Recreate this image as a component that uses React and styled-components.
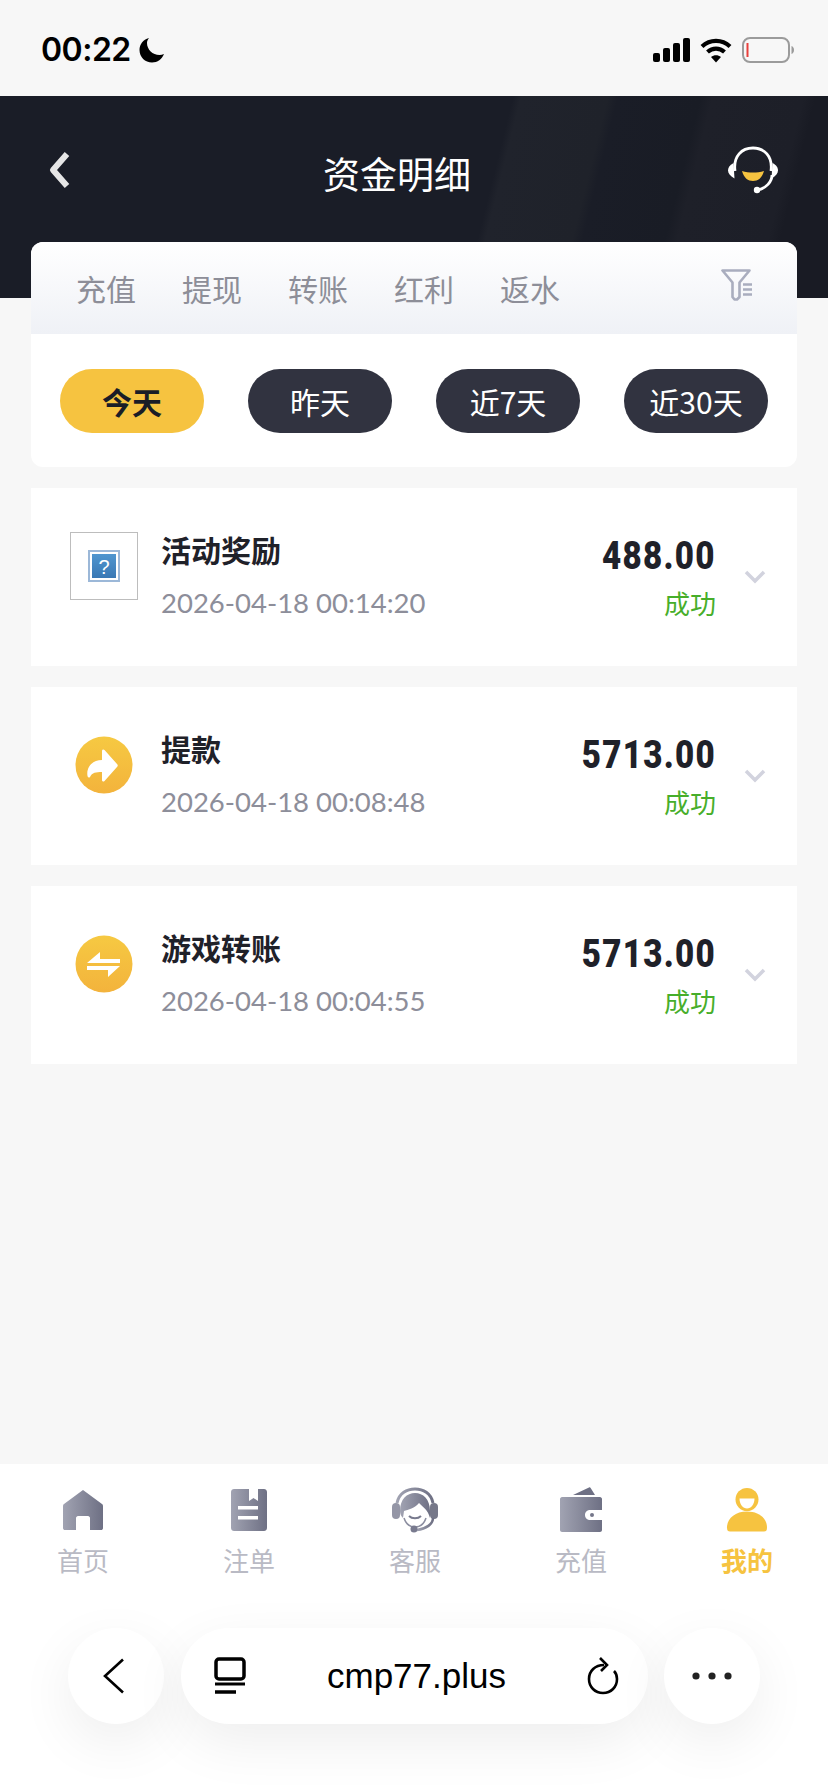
import React from 'react';
import styled, { createGlobalStyle } from 'styled-components';

const GlobalStyle = createGlobalStyle`
  html, body { margin: 0; padding: 0; background: #f7f7f7; }
  * { box-sizing: border-box; }
  body { font-family: "Noto Sans CJK SC", "Noto Sans", sans-serif; }
`;

const Page = styled.div`
  width: 828px;
  height: 1792px;
  display: flex;
  flex-direction: column;
  background: #f7f7f7;
  overflow: hidden;
`;

const StatusBar = styled.div`
  height: 96px;
  flex: none;
  padding: 30px 34px 0 41px;
  display: flex;
  justify-content: space-between;
  align-items: flex-start;
`;

const Clock = styled.div`
  display: flex;
  align-items: center;
  gap: 8px;
  font: 600 32px/40px Inter, sans-serif;
  letter-spacing: -0.5px;
  color: #000;
`;

const StatusIcons = styled.div`
  display: flex;
  align-items: center;
  gap: 10px;
  padding-top: 7px;
`;

const Header = styled.header`
  height: 202px;
  flex: none;
  padding: 0 50px 54px 48px;
  display: flex;
  align-items: center;
  justify-content: space-between;
  color: #fff;
  background: linear-gradient(
    104deg,
    #1a1d27 0,
    #1a1d27 498px,
    #20232c 506px,
    #1f222a 590px,
    #1a1d27 600px,
    #191c25 680px,
    #1e2029 692px,
    #1d1f28 780px,
    #191b24 792px
  );
`;

const Title = styled.h1`
  margin: 6px 0 0 -4px;
  font-size: 37px;
  line-height: 48px;
  font-weight: 400;
  color: #fff;
`;

const Content = styled.main`
  padding: 0 31px;
  margin-top: -56px;
  display: flex;
  flex-direction: column;
  gap: 21px;
`;

const Panel = styled.section`
  height: 225px;
  border-radius: 12px;
  overflow: hidden;
  background: #fff;
`;

const TabRow = styled.div`
  height: 92px;
  padding: 0 44px 0 45px;
  display: flex;
  align-items: center;
  gap: 46px;
  background: linear-gradient(180deg, #ffffff 0%, #eff1f6 100%);
`;

const Tab = styled.span`
  font-size: 30px;
  line-height: 40px;
  color: #8d8e98;
`;

const FilterButton = styled.span`
  margin-left: auto;
  display: flex;
  margin-top: -7px;
`;

const PillRow = styled.div`
  padding: 35px 29px 0;
  display: flex;
  justify-content: space-between;
`;

const Pill = styled.span`
  width: 144px;
  height: 64px;
  border-radius: 32px;
  display: flex;
  align-items: center;
  justify-content: center;
  font-size: 30px;
  font-weight: ${(p) => (p.$active ? 700 : 400)};
  color: ${(p) => (p.$active ? '#1a1d27' : '#fff')};
  background: ${(p) => (p.$active ? '#f6c340' : '#313340')};
`;

const Card = styled.article`
  height: 178px;
  background: #fff;
  padding: 0 31px 0 39px;
  display: flex;
  align-items: center;
`;

const IconSlot = styled.div`
  width: 68px;
  height: 68px;
  flex: none;
  margin-top: -22px;
  margin-right: 23px;
  display: flex;
  align-items: center;
  justify-content: center;
`;

const BrokenImage = styled.div`
  width: 68px;
  height: 68px;
  border: 1px solid #bdbdbd;
  display: flex;
  align-items: center;
  justify-content: center;
`;

const Info = styled.div`
  flex: 1;
  display: flex;
  flex-direction: column;
  gap: 16px;
  margin-top: -5px;
`;

const Name = styled.div`
  font-size: 30px;
  line-height: 40px;
  font-weight: 700;
  color: #1f2129;
`;

const Time = styled.div`
  font: 400 27.5px/36px Lato, "Noto Sans", sans-serif;
  color: #8d8e9a;
`;

const Result = styled.div`
  display: flex;
  flex-direction: column;
  align-items: flex-end;
  margin-top: 0;
  margin-right: 28px;
`;

const Amount = styled.div`
  font: 900 39px/44px Roboto, sans-serif;
  letter-spacing: 1.5px;
  color: #1f2129;
  transform: scaleX(0.85);
  transform-origin: right center;
`;

const State = styled.div`
  margin-top: 7px;
  font-size: 26px;
  line-height: 36px;
  color: #47ae2a;
`;

const TabBar = styled.nav`
  margin-top: auto;
  height: 328px;
  flex: none;
  background: #fff;
  display: flex;
  flex-direction: column;
`;

const NavRow = styled.div`
  display: grid;
  grid-template-columns: repeat(5, 166px);
  padding-top: 23px;
`;

const NavItem = styled.div`
  display: flex;
  flex-direction: column;
  align-items: center;
  gap: 9px;
  font-size: 26px;
  line-height: 36px;
  font-weight: ${(p) => (p.$active ? 700 : 400)};
  color: ${(p) => (p.$active ? '#f6c340' : '#b9bac4')};
`;

const NavIcon = styled.div`
  height: 46px;
  display: flex;
  align-items: center;
  justify-content: center;
`;

const BrowserBar = styled.div`
  margin-top: 50px;
  padding: 0 68px;
  display: flex;
  justify-content: space-between;
`;

const RoundButton = styled.div`
  width: 96px;
  height: 96px;
  border-radius: 50%;
  background: #fff;
  display: flex;
  align-items: center;
  justify-content: center;
  box-shadow: 0 18px 56px rgba(0, 0, 0, 0.07);
`;

const UrlBar = styled.div`
  width: 467px;
  height: 96px;
  border-radius: 48px;
  background: #fff;
  padding: 0 28px 0 33px;
  display: flex;
  align-items: center;
  justify-content: space-between;
  box-shadow: 0 18px 56px rgba(0, 0, 0, 0.07);
`;

const Url = styled.span`
  font: 400 35px/40px "Liberation Sans", Arial, sans-serif;
  color: #000;
`;

const Moon = () => (
  <svg width="26" height="26" viewBox="0 0 26 26">
    <path d="M10 1C4 2.500 0.500 7.500 0.500 13c0 7 5.500 12.500 12.500 12.500 5.500 0 10-3.500 12-8.500-1.500.6-3 1-4.500 1C13.500 18 8 12.500 8 6c0-1.800.7-3.500 2-5z" fill="#000" />
  </svg>
);

const Signal = () => (
  <svg width="37" height="24" viewBox="0 0 37 24" fill="#000">
    <rect x="0" y="15" width="7" height="9" rx="2" />
    <rect x="10" y="10" width="7" height="14" rx="2" />
    <rect x="20" y="5" width="7" height="19" rx="2" />
    <rect x="30" y="0" width="7" height="24" rx="2" />
  </svg>
);

const Wifi = () => (
  <svg width="32" height="25" viewBox="0 0 32 25" fill="none" stroke="#000" strokeWidth="4.200">
    <path d="M2 8.500C10 1 22 1 30 8.500" />
    <path d="M7.500 14c5-4.500 12-4.500 17 0" />
    <path d="M16 24.500l-5-5.500c3-2.300 7-2.300 10 0z" fill="#000" stroke="none" />
  </svg>
);

const Battery = () => (
  <svg width="52" height="26" viewBox="0 0 52 26" fill="none">
    <rect x="1" y="1" width="46" height="24" rx="7" stroke="#9b9b9b" strokeWidth="2" fill="#f7f7f7" />
    <rect x="4.500" y="6" width="2" height="14" fill="#e8403c" />
    <path d="M49.500 9c1.500.5 2.500 2 2.500 4s-1 3.500-2.500 4z" fill="#9b9b9b" />
  </svg>
);

const BackArrow = () => (
  <svg width="22" height="38" viewBox="0 0 22 38" fill="none">
    <path d="M19 3L5 19l14 16" stroke="#e6e6e6" strokeWidth="6" strokeLinejoin="round" />
  </svg>
);

const ServiceIcon = () => (
  <svg width="50" height="48" viewBox="0 0 50 48" fill="none">
    <path d="M7 25C5 10 14 2 25 2s20 8 18 23" stroke="#fff" strokeWidth="2.800" />
    <path d="M44 29c0 7-6 13-14 15" stroke="#fff" strokeWidth="2.800" />
    <circle cx="29" cy="44" r="3.200" fill="#fff" />
    <path d="M5.500 17C1.500 19 0 22 0 24.500s2 5.500 6.500 8z" fill="#fff" />
    <path d="M44.500 17c4 2 5.500 5 5.500 7.500s-2 5.500-6.500 8z" fill="#fff" />
    <path d="M14 25c7 2 15 2 22 0-2 7-6 10-11 10s-9-3-11-10z" fill="#f6c340" />
  </svg>
);

const FilterIcon = () => (
  <svg width="32" height="32" viewBox="0 0 32 32" fill="none" stroke="#a9adbe" strokeWidth="2.600">
    <path d="M1.500 1.500h27L18.500 13.500V28l-2.500 2.500h-2.500L11.500 28V13.500z" strokeLinejoin="round" />
    <path d="M22 15.500h9M22 20.500h9M22 25.500h9" />
  </svg>
);

const QuestionImage = () => (
  <svg width="32" height="32" viewBox="0 0 32 32">
    <defs>
      <linearGradient id="qFill" x1="0" y1="0" x2="0" y2="1">
        <stop offset="0" stopColor="#5096cf" />
        <stop offset="1" stopColor="#3a78b4" />
      </linearGradient>
    </defs>
    <rect x="0" y="0" width="32" height="32" fill="#9cb8d8" />
    <rect x="2" y="2" width="28" height="28" fill="#fff" />
    <rect x="4" y="4" width="24" height="24" fill="url(#qFill)" />
    <text x="16" y="24" textAnchor="middle" fontFamily="Liberation Sans" fontSize="20" fill="#fff">?</text>
  </svg>
);

const CoinGradient = ({ id }) => (
  <defs>
    <linearGradient id={id} x1="0" y1="0" x2="0" y2="1">
      <stop offset="0" stopColor="#f6c942" />
      <stop offset="1" stopColor="#f3b33c" />
    </linearGradient>
  </defs>
);

const WithdrawIcon = () => (
  <svg width="58" height="58" viewBox="0 0 58 58">
    <CoinGradient id="coinA" />
    <circle cx="29" cy="29" r="28.500" fill="url(#coinA)" />
    <path d="M27 15c0-1.500 1.500-2 2.500-1L42 28c1 1 1 2 0 3L29.500 45c-1 1-2.500.5-2.500-1v-8c-6 0-10 .5-12 5-1 1-2 .5-2.500-1-1.500-9 5-16 14.500-16z" fill="#fff" />
  </svg>
);

const TransferIcon = () => (
  <svg width="58" height="58" viewBox="0 0 58 58">
    <CoinGradient id="coinB" />
    <circle cx="29" cy="29" r="28.500" fill="url(#coinB)" />
    <path d="M25 17v7h20v4H12z" fill="#fff" />
    <path d="M12 31h33L33 42v-7H12z" fill="#fff" />
  </svg>
);

const Chevron = styled.svg`
  flex: none;
`;

const ChevronIcon = () => (
  <Chevron width="22" height="14" viewBox="0 0 22 14" fill="none">
    <path d="M2 2l9 9 9-9" stroke="#d2d3de" strokeWidth="3.500" />
  </Chevron>
);

const NavGradient = ({ id }) => (
  <defs>
    <linearGradient id={id} x1="0" y1="0" x2="1" y2="0">
      <stop offset="0" stopColor="#a1a3b2" />
      <stop offset="1" stopColor="#6e7084" />
    </linearGradient>
  </defs>
);

const HomeIcon = () => (
  <svg width="42" height="42" viewBox="0 0 42 42">
    <NavGradient id="navHome" />
    <path d="M21 1l19 14c1 .8 1 1.500 1 3v21c0 1.500-1 2-2 2H28V29c0-1-1-2-2-2H16c-1 0-2 1-2 2v12H3c-1 0-2-.5-2-2V18c0-1.500 0-2.200 1-3z" fill="url(#navHome)" />
  </svg>
);

const BetIcon = () => (
  <svg width="36" height="42" viewBox="0 0 36 42">
    <NavGradient id="navBet" />
    <path d="M3 0h15v12l4.500-3 4.500 3V0h6c1.500 0 3 1 3 3v36c0 2-1.500 3-3 3H3c-1.500 0-3-1-3-3V3c0-2 1.500-3 3-3z" fill="url(#navBet)" />
    <rect x="7" y="17" width="20" height="3.500" fill="#fff" />
    <rect x="7" y="27" width="20" height="3.500" fill="#fff" />
  </svg>
);

const AgentIcon = () => (
  <svg width="46" height="46" viewBox="0 0 46 46" fill="none">
    <NavGradient id="navAgent" />
    <path d="M5 16C7 6 15 2 23 2s16 4 18 14" stroke="url(#navAgent)" strokeWidth="3" />
    <path d="M8 24C8 12 15 6 23 6s15 6 15 18v7c-2-8-7-11-11-15-4 5-11 7-15 8l-1 7c-2-2-3-4-3-7z" fill="url(#navAgent)" />
    <rect x="0" y="16" width="8" height="16" rx="4" fill="#9496a6" />
    <rect x="38" y="16" width="8" height="16" rx="4" fill="#767889" />
    <path d="M12 31c2 6 6 9 11 9s9-3 11-9" stroke="#8c8ea0" strokeWidth="1.500" />
    <path d="M17 29c3 3 9 3 12 0" stroke="#787a8e" strokeWidth="2" />
    <path d="M41 31c0 6-7 11-16 12" stroke="url(#navAgent)" strokeWidth="2.500" />
    <circle cx="22" cy="42" r="3.500" fill="#787a8e" />
  </svg>
);

const WalletIcon = () => (
  <svg width="42" height="46" viewBox="0 0 42 46">
    <NavGradient id="navWallet" />
    <path d="M13 8L29 .5c.8-.4 1.300 0 1.800.8L35 8z" fill="#6e7084" />
    <path d="M2 10h38c1 0 2 1 2 2v11H30c-3 0-5 2.200-5 5s2 5 5 5h12v10c0 1-1 2-2 2H2c-1 0-2-1-2-2V12c0-1 1-2 2-2z" fill="url(#navWallet)" />
    <circle cx="32" cy="28" r="2" fill="#74768a" />
  </svg>
);

const MineIcon = () => (
  <svg width="42" height="44" viewBox="0 0 42 44">
    <ellipse cx="21" cy="11.500" rx="11.500" ry="11.500" fill="#f6c340" />
    <path d="M13.500 10.500h15c0 6-3.500 10-7.500 10s-7.500-4-7.500-10z" fill="#fff" />
    <path d="M21 23.500c12 0 20 7 20 16 0 3-1 4-3 4H4c-2 0-3-1-3-4 0-9 8-16 20-16z" fill="#f6c340" />
  </svg>
);

const BrowserBack = () => (
  <svg width="26" height="36" viewBox="0 0 26 36" fill="none">
    <path d="M20 1.500L2 18l18 16.500" stroke="#000" strokeWidth="2.600" />
  </svg>
);

const ReaderIcon = () => (
  <svg width="32" height="38" viewBox="0 0 32 38" fill="none">
    <rect x="2" y="2" width="28" height="20" rx="3" stroke="#000" strokeWidth="3.500" />
    <path d="M1 27h30" stroke="#000" strokeWidth="3" />
    <path d="M1 35h21" stroke="#000" strokeWidth="3.500" />
  </svg>
);

const ReloadIcon = () => (
  <svg width="32" height="38" viewBox="0 0 32 38" fill="none">
    <path d="M17 8C8 8 2 14 2 22s6 14 14 14 14-6 14-14c0-3-1-6-3-8" stroke="#000" strokeWidth="2.600" />
    <path d="M13 1l7 7-6 6" stroke="#000" strokeWidth="2.600" />
  </svg>
);

const MoreIcon = () => (
  <svg width="40" height="12" viewBox="0 0 40 12" fill="#222">
    <circle cx="4" cy="6" r="3.600" />
    <circle cx="20" cy="6" r="3.600" />
    <circle cx="36" cy="6" r="3.600" />
  </svg>
);

const tabs = ['充值', '提现', '转账', '红利', '返水'];
const days = ['今天', '昨天', '近7天', '近30天'];

const records = [
  { name: '活动奖励', time: '2026-04-18 00:14:20', amount: '488.00', icon: <BrokenImage><QuestionImage /></BrokenImage> },
  { name: '提款', time: '2026-04-18 00:08:48', amount: '5713.00', icon: <WithdrawIcon /> },
  { name: '游戏转账', time: '2026-04-18 00:04:55', amount: '5713.00', icon: <TransferIcon /> },
];

const navItems = [
  { label: '首页', icon: <HomeIcon /> },
  { label: '注单', icon: <BetIcon /> },
  { label: '客服', icon: <AgentIcon /> },
  { label: '充值', icon: <WalletIcon /> },
  { label: '我的', icon: <MineIcon />, active: true },
];

const App = () => {
  return (
    <Page>
      <GlobalStyle />
      <StatusBar>
        <Clock>00:22 <Moon /></Clock>
        <StatusIcons>
          <Signal />
          <Wifi />
          <Battery />
        </StatusIcons>
      </StatusBar>

      <Header>
        <BackArrow />
        <Title>资金明细</Title>
        <ServiceIcon />
      </Header>

      <Content>
        <Panel>
          <TabRow>
            {tabs.map((tab) => <Tab key={tab}>{tab}</Tab>)}
            <FilterButton><FilterIcon /></FilterButton>
          </TabRow>
          <PillRow>
            {days.map((day, index) => <Pill key={day} $active={index === 0}>{day}</Pill>)}
          </PillRow>
        </Panel>

        {records.map((item) => (
          <Card key={item.time}>
            <IconSlot>{item.icon}</IconSlot>
            <Info>
              <Name>{item.name}</Name>
              <Time>{item.time}</Time>
            </Info>
            <Result>
              <Amount>{item.amount}</Amount>
              <State>成功</State>
            </Result>
            <ChevronIcon />
          </Card>
        ))}
      </Content>

      <TabBar>
        <NavRow>
          {navItems.map((item) => (
            <NavItem key={item.label} $active={item.active}>
              <NavIcon>{item.icon}</NavIcon>
              {item.label}
            </NavItem>
          ))}
        </NavRow>
        <BrowserBar>
          <RoundButton><BrowserBack /></RoundButton>
          <UrlBar>
            <ReaderIcon />
            <Url>cmp77.plus</Url>
            <ReloadIcon />
          </UrlBar>
          <RoundButton><MoreIcon /></RoundButton>
        </BrowserBar>
      </TabBar>
    </Page>
  );
};

export default App;
